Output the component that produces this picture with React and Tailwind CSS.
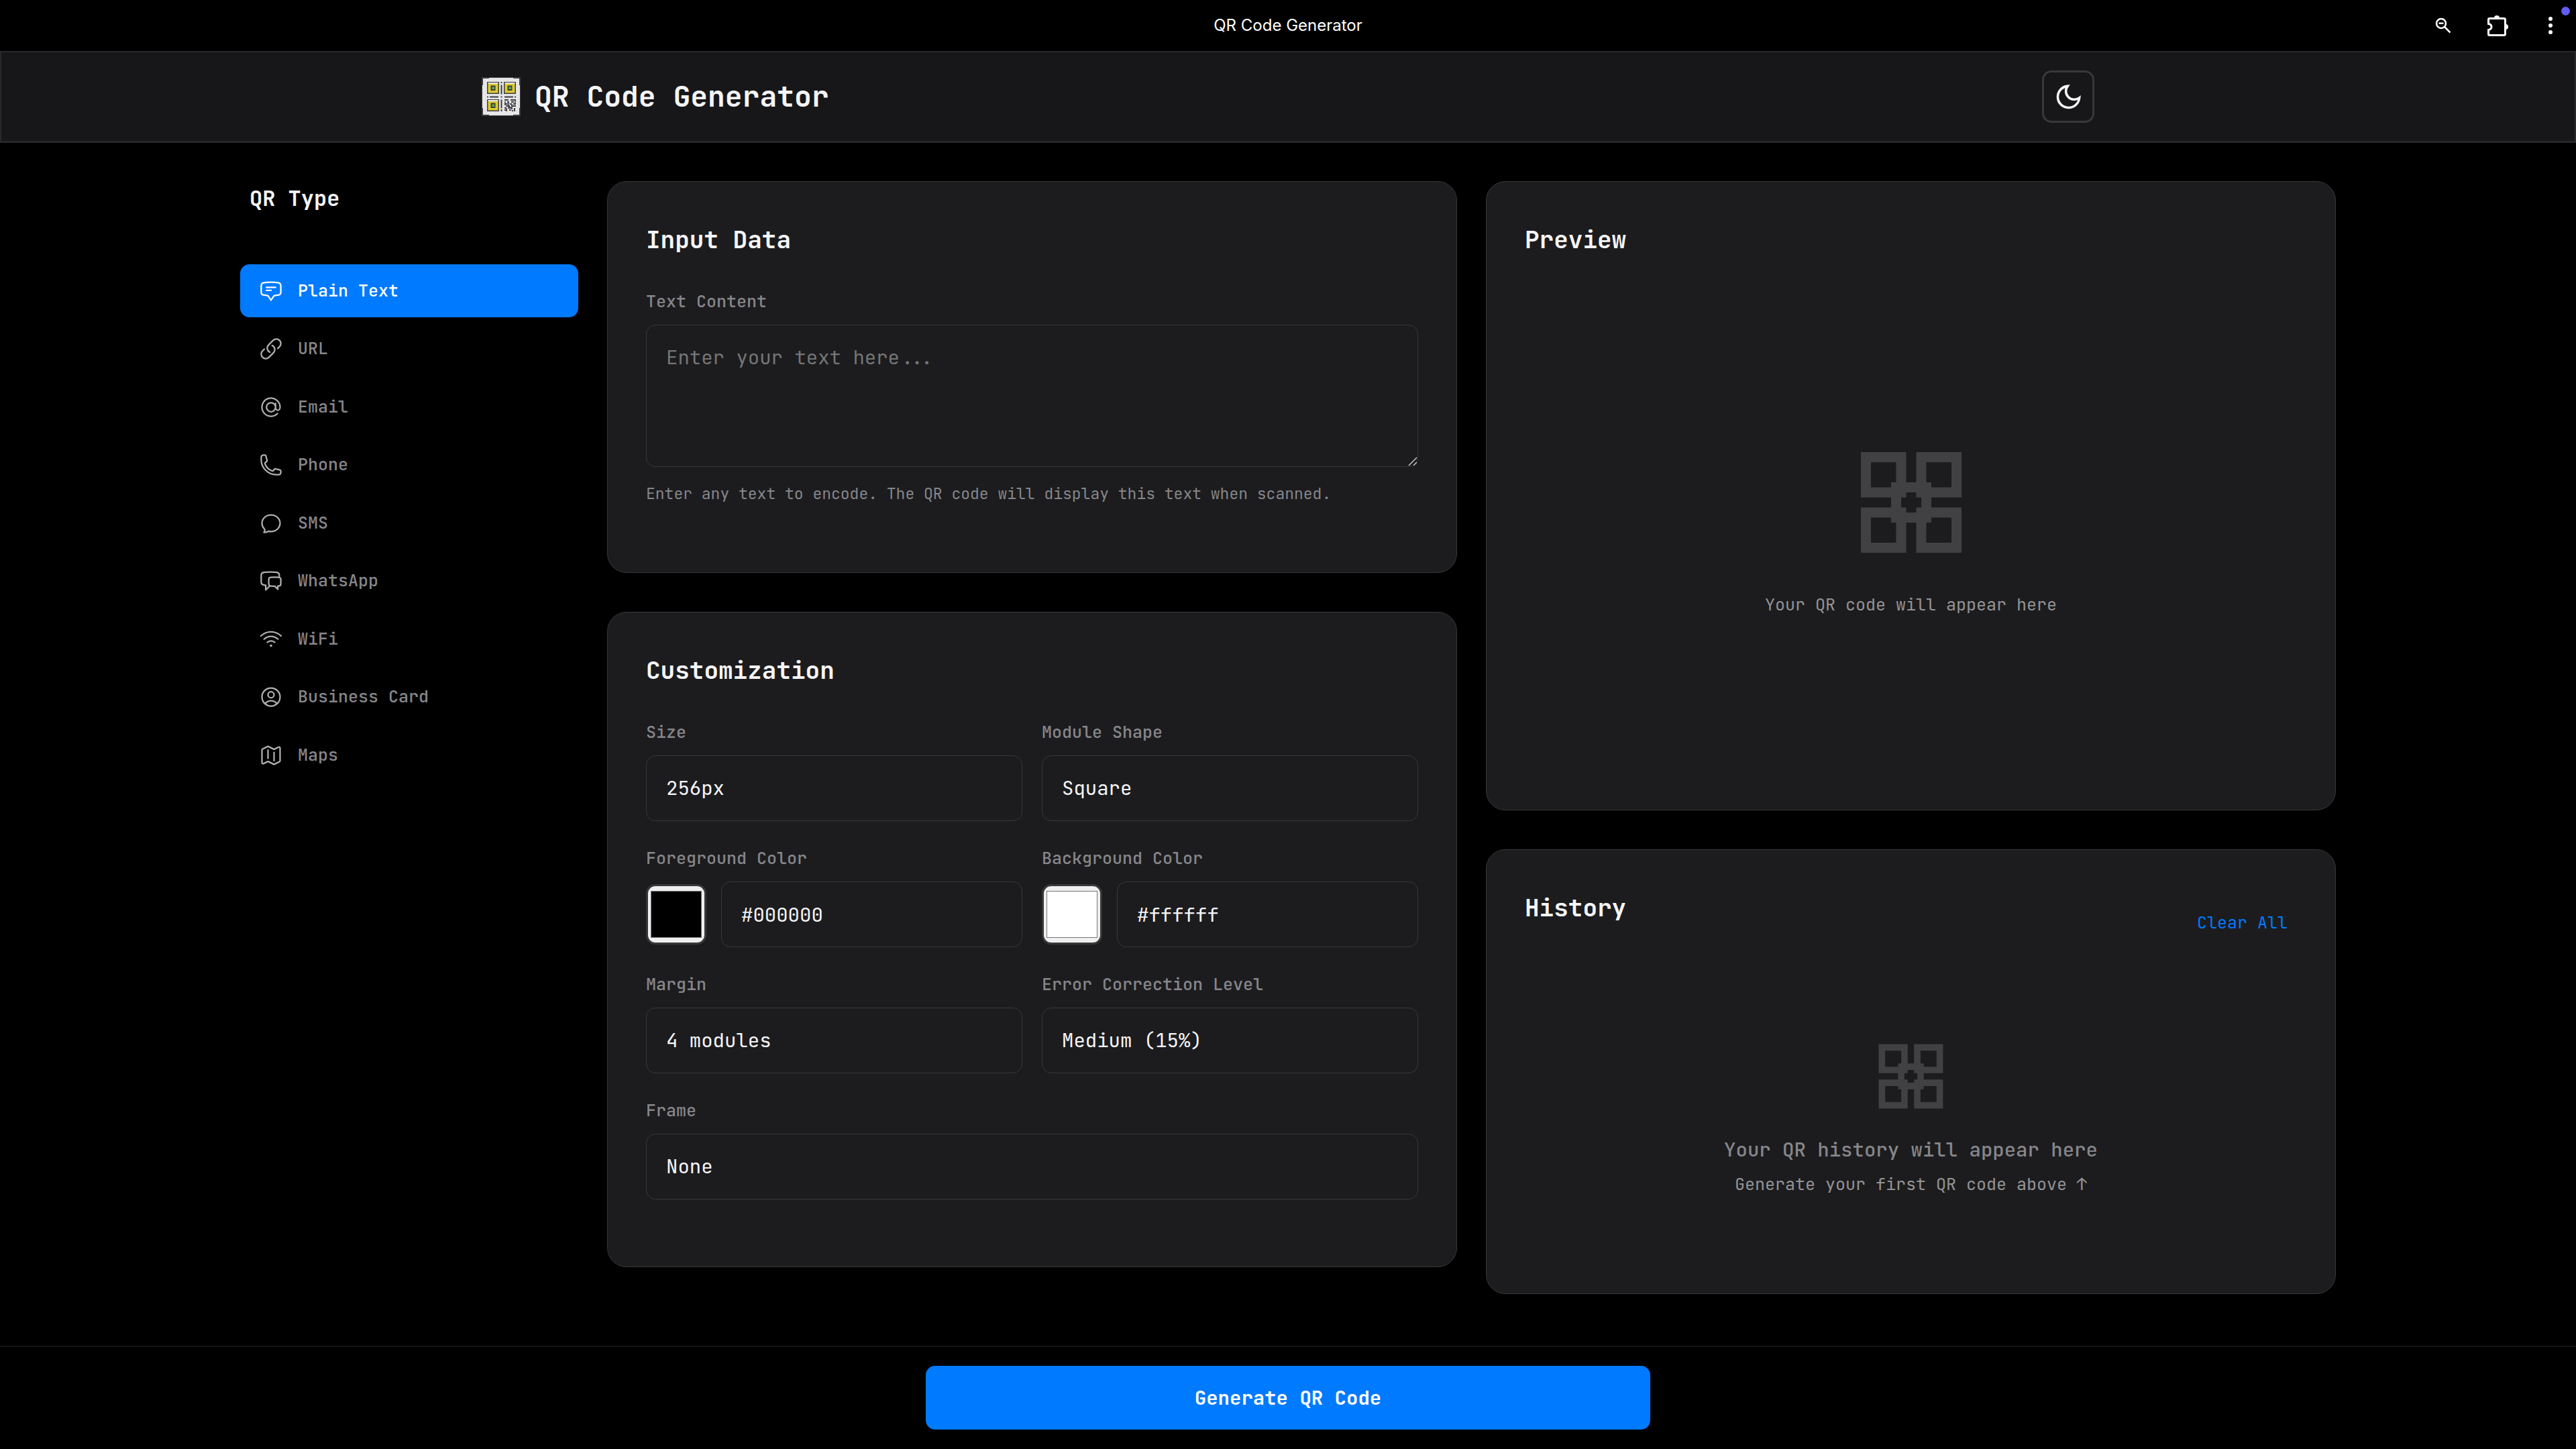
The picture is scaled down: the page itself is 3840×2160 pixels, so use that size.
import React, { useState } from "react";
import {
  HiOutlineChatBubbleBottomCenterText,
  HiOutlineLink,
  HiOutlineAtSymbol,
  HiOutlinePhone,
  HiOutlineChatBubbleOvalLeft,
  HiOutlineChatBubbleLeftRight,
  HiOutlineWifi,
  HiOutlineUserCircle,
  HiOutlineMap,
} from "react-icons/hi2";

const TYPES = [
  ["Plain Text", HiOutlineChatBubbleBottomCenterText],
  ["URL", HiOutlineLink],
  ["Email", HiOutlineAtSymbol],
  ["Phone", HiOutlinePhone],
  ["SMS", HiOutlineChatBubbleOvalLeft],
  ["WhatsApp", HiOutlineChatBubbleLeftRight],
  ["WiFi", HiOutlineWifi],
  ["Business Card", HiOutlineUserCircle],
  ["Maps", HiOutlineMap],
];

const FIELD =
  "block w-full h-[98px] rounded-[14px] border border-[#38383a] bg-[#1c1c1e] px-[29px] text-[29px] text-[#f5f5f7] appearance-none outline-none";

function Logo() {
  const finder = (x, y) => (
    <g key={`${x}-${y}`}>
      <rect x={x} y={y} width="18" height="18" fill="#3c3c44" />
      <rect x={x + 1.5} y={y + 1} width="15" height="2" fill="#e6e6e6" />
      <rect x={x + 1.5} y={y + 3} width="15" height="13.5" fill="#dccb2e" />
      <rect x={x + 5.5} y={y + 5.5} width="7" height="7.5" fill="#3c3c44" />
      <rect x={x + 7.5} y={y + 7.5} width="3.5" height="3.5" fill="#5cb544" />
    </g>
  );
  return (
    <svg viewBox="0 0 58 58" className="size-[58px] shrink-0" aria-hidden="true">
      <rect width="58" height="58" fill="#3c3c44" />
      <path d="M2 2h9V1h36v1h9v10h1v34h-1v10h-9v1H11v-1H2V46H1V12h1z" fill="#e6e6e6" />
      {finder(8, 7)}
      {finder(33, 7)}
      {finder(8, 33)}
      <g stroke="#3c3c44" strokeWidth="2" fill="none">
        <path d="M29.5 7v2M29.5 11.500v14M29.500 33.500v13M29.500 48v3" />
        <path d="M8 29.500h2M12 29.500h13M34 29.500h13M49 29.500h2M28.500 29.500h2" />
        <path d="M34 34h6M43 34h8M38 37h3M44 37h4M34 40h5M42 40h3M47 40h4M36 43h6M44 43h7M34 46h3M40 46h6M49 46v5M34 49h4M41 49h3M46 49v2" />
        <path d="M35 36v6M40 38v9M45 40v8M50 33v8M37 46v5M42 43v4" strokeWidth="1.500" />
      </g>
    </svg>
  );
}

function QrGlyph({ className }) {
  return (
    <svg
      viewBox="0 0 24 24"
      className={className}
      fill="none"
      stroke="#414143"
      strokeWidth="2"
      aria-hidden="true"
    >
      <path d="M3 3h7v7H3zM14 3h7v7h-7zM3 14h7v7H3zM14 14h7v7h-7zM9 9h6v6H9z" />
    </svg>
  );
}

function Card({ children, className = "" }) {
  return (
    <section
      className={`rounded-[29px] border border-[#38383a] bg-[#1c1c1e] px-[57px] pt-[57px] ${className}`}
    >
      {children}
    </section>
  );
}

function Heading({ children }) {
  return (
    <h2 className="mb-[43px] text-[36px] leading-[58px] font-semibold text-[#f5f5f7]">{children}</h2>
  );
}

function Label({ id, children }) {
  return (
    <label htmlFor={id} className="mb-[15px] block text-[25px] leading-[40px] font-medium text-[#86868b]">
      {children}
    </label>
  );
}

function SelectField({ id, label, options, className }) {
  return (
    <div className={className}>
      <Label id={id}>{label}</Label>
      <select id={id} className={FIELD}>
        {options.map((o) => (
          <option key={o}>{o}</option>
        ))}
      </select>
    </div>
  );
}

function ColorField({ id, label, initial }) {
  const [value, setValue] = useState(initial);
  return (
    <div>
      <Label id={id}>{label}</Label>
      <div className="flex items-center gap-[22px]">
        <input
          type="color"
          aria-label={`${label} swatch`}
          value={value}
          onChange={(e) => setValue(e.target.value)}
          className="size-[90px] shrink-0 appearance-none rounded-[14px] border-[3px] border-[#38383a] bg-[#efefef] p-0 [&::-webkit-color-swatch-wrapper]:px-1 [&::-webkit-color-swatch-wrapper]:py-[7px] [&::-webkit-color-swatch]:rounded-none [&::-webkit-color-swatch]:border [&::-webkit-color-swatch]:border-[#767676]"
        />
        <input id={id} type="text" value={value} onChange={(e) => setValue(e.target.value)} className={FIELD} />
      </div>
    </div>
  );
}

export default function App() {
  const [active, setActive] = useState("Plain Text");
  return (
    <div className="flex min-h-screen flex-col bg-black font-['JetBrains_Mono','DejaVu_Sans_Mono',monospace] text-[#f5f5f7]">
      <div className="grid h-[76px] grid-cols-[1fr_auto_1fr] items-center font-[Inter,sans-serif]">
        <span />
        <span className="text-[24px] text-white">QR Code Generator</span>
        <div className="relative flex items-center justify-end gap-[44px] pr-[20px] text-white">
          <button aria-label="Zoom">
            <svg viewBox="0 0 36 36" className="size-[36px]" fill="none" stroke="currentColor" strokeWidth="2.5">
              <circle cx="11" cy="15" r="7" />
              <path d="M16 20l8.500 8.500M7.500 14.700h7" />
            </svg>
          </button>
          <button aria-label="Extensions">
            <svg viewBox="0 0 32 32" className="size-[32px]" fill="none" stroke="currentColor" strokeWidth="3">
              <path d="M3 5.500h22a1.500 1.500 0 0 1 1.500 1.500v22a1.500 1.500 0 0 1-1.500 1.500H3a1.500 1.500 0 0 1-1.500-1.500v-6.500c6-1 6-8 0-9V7A1.500 1.500 0 0 1 3 5.500z" />
              <path d="M10 5a4 4 0 0 1 8 0zM27 14a4 4 0 0 1 0 8z" fill="currentColor" stroke="none" />
            </svg>
          </button>
          <button aria-label="More">
            <svg viewBox="0 0 36 36" className="size-[36px]" fill="currentColor">
              <circle cx="18" cy="8" r="3" />
              <circle cx="18" cy="18" r="3" />
              <circle cx="18" cy="28" r="3" />
            </svg>
          </button>
          <span className="absolute -top-[10px] right-[9px] size-[13px] rounded-full bg-[#635cf5]" />
        </div>
      </div>

      <header className="border-2 border-b-[3px] border-[#28282a] bg-[#171719]">
        <div className="mx-auto flex max-w-[2520px] items-center justify-between px-[58px] py-[27px]">
          <div className="flex items-center gap-[21px]">
            <Logo />
            <h1 className="text-[43px] leading-[60px] font-bold">QR Code Generator</h1>
          </div>
          <button
            aria-label="Toggle theme"
            className="flex size-[78px] items-center justify-center rounded-[14px] border-[3px] border-[#38383a]"
          >
            <svg viewBox="0 0 24 24" className="size-[43px]" fill="none" stroke="currentColor" strokeWidth="2">
              <path d="M21 12.790A9 9 0 1 1 11.210 3 7 7 0 0 0 21 12.790z" />
            </svg>
          </button>
        </div>
      </header>

      <main className="mx-auto grid w-full max-w-[3240px] grow grid-cols-[504px_1fr_1fr] items-start gap-[43px] px-[58px] py-[57px]">
        <nav aria-label="QR Type">
          <h2 className="mb-[72px] px-[14px] text-[32px] leading-[52px] font-semibold">QR Type</h2>
          <ul className="flex min-h-[771px] flex-col justify-between">
            {TYPES.map(([name, Icon]) => (
              <li key={name}>
                <button
                  onClick={() => setActive(name)}
                  className={`flex h-[79px] w-full items-center gap-[22px] rounded-[14px] px-[28px] text-[25px] font-medium ${
                    active === name ? "bg-[#007aff] text-white" : "text-[#86868b]"
                  }`}
                >
                  <Icon className={`size-[36px] shrink-0 ${active === name ? "" : "text-[#b0b0b0]"}`} />
                  {name}
                </button>
              </li>
            ))}
          </ul>
        </nav>

        <div className="flex flex-col gap-[58px]">
          <Card className="pb-[98px]">
            <Heading>Input Data</Heading>
            <Label id="content">Text Content</Label>
            <div className="relative">
              <textarea
                id="content"
                placeholder="Enter your text here..."
                className="block h-[212px] w-full resize rounded-[14px] border border-[#38383a] bg-[#1c1c1e] px-[29px] py-[25px] text-[29px] leading-[46px] outline-none placeholder:text-[#757575] [&::-webkit-resizer]:hidden"
              />
              <svg
                viewBox="0 0 14 14"
                className="pointer-events-none absolute right-[1px] bottom-[1px] size-[14px]"
                stroke="#c8c8c8"
                strokeWidth="1.5"
                aria-hidden="true"
              >
                <path d="M1 13L13 1M8 13l5-5" />
              </svg>
            </div>
            <p className="mt-[21px] text-[23px] leading-[38px] text-[#86868b]">
              Enter any text to encode. The QR code will display this text when scanned.
            </p>
          </Card>

          <Card className="pb-[100px]">
            <Heading>Customization</Heading>
            <div className="grid grid-cols-2 gap-x-[29px] gap-y-[35px]">
              <SelectField id="size" label="Size" options={["256px", "512px", "1024px"]} />
              <SelectField id="shape" label="Module Shape" options={["Square", "Rounded", "Dots"]} />
              <ColorField id="fg" label="Foreground Color" initial="#000000" />
              <ColorField id="bg" label="Background Color" initial="#ffffff" />
              <SelectField id="margin" label="Margin" options={["4 modules", "2 modules", "None"]} />
              <SelectField
                id="ecl"
                label="Error Correction Level"
                options={["Medium (15%)", "Low (7%)", "Quartile (25%)", "High (30%)"]}
              />
              <SelectField id="frame" label="Frame" options={["None", "Simple", "Rounded"]} className="col-span-2" />
            </div>
          </Card>
        </div>

        <div className="flex flex-col gap-[58px]">
          <Card className="pb-[57px]">
            <Heading>Preview</Heading>
            <div className="flex min-h-[721px] flex-col items-center justify-center gap-[42px]">
              <QrGlyph className="size-[180px]" />
              <p className="text-[25px] leading-[40px] text-[#939395]">Your QR code will appear here</p>
            </div>
          </Card>

          <Card className="pb-[57px]">
            <div className="mb-[36px] flex items-center justify-between">
              <Heading>History</Heading>
              <button className="px-[14px] text-[25px] leading-[40px] text-[#007aff]">Clear All</button>
            </div>
            <div className="flex flex-col items-center py-[86px]">
              <QrGlyph className="mb-[29px] size-[115px]" />
              <p className="mb-[8px] text-[29px] leading-[46px] font-medium text-[#86868b]">
                Your QR history will appear here
              </p>
              <p className="text-[25px] leading-[40px] text-[#939395]">Generate your first QR code above ↑</p>
            </div>
          </Card>
        </div>
      </main>

      <footer className="flex justify-center border-t-2 border-[#141414] px-[58px] pt-[28px] pb-[29px]">
        <button className="h-[95px] w-full max-w-[1080px] rounded-[14px] bg-[#007aff] text-[29px] font-semibold text-white">
          Generate QR Code
        </button>
      </footer>
    </div>
  );
}
